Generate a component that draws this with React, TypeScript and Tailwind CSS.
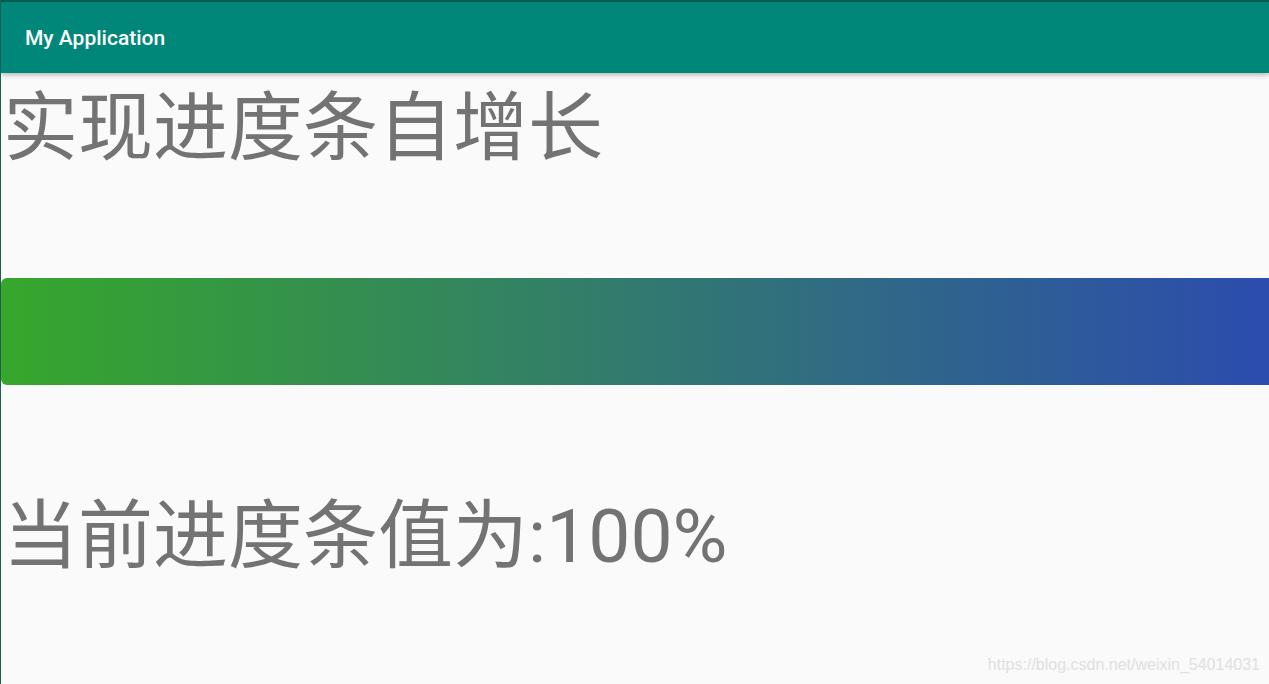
export default function App() {
  const cjk = { fontFamily: 'Roboto, "Noto Sans CJK SC", sans-serif' };
  return (
    <div className="w-[1269px] h-[684px] overflow-hidden bg-[#fafafa] flex border-l border-[#1f5e57] relative" style={cjk}>
      <div className="flex-1 flex flex-col">
        <div className="h-[73px] bg-[#00877a] border-t-2 border-[#005a50] flex items-center pl-[24px] shadow-[0_2px_5px_rgba(0,0,0,0.28)] relative z-10">
          <span className="text-white text-[21px] font-medium leading-none mt-[1px]">My Application</span>
        </div>
        <div className="text-[#737373] text-[75px] leading-[100px] pl-[2px] mt-[5px]">实现进度条自增长</div>
        <div className="mt-[100px] h-[107px] rounded-l-[6px] bg-[linear-gradient(to_right,#36a72b,#327a6f_50%,#2c4cae)]" />
        <div className="text-[#737373] text-[75px] leading-[100px] pl-[2px] mt-[101px]">当前进度条值为:100%</div>
      </div>
      <div className="absolute right-[9px] bottom-[11px] text-[16px] text-[#e0e0e0] leading-none" style={{ fontFamily: '"Liberation Sans", sans-serif' }}>
        https://blog.csdn.net/weixin_54014031
      </div>
    </div>
  );
}
